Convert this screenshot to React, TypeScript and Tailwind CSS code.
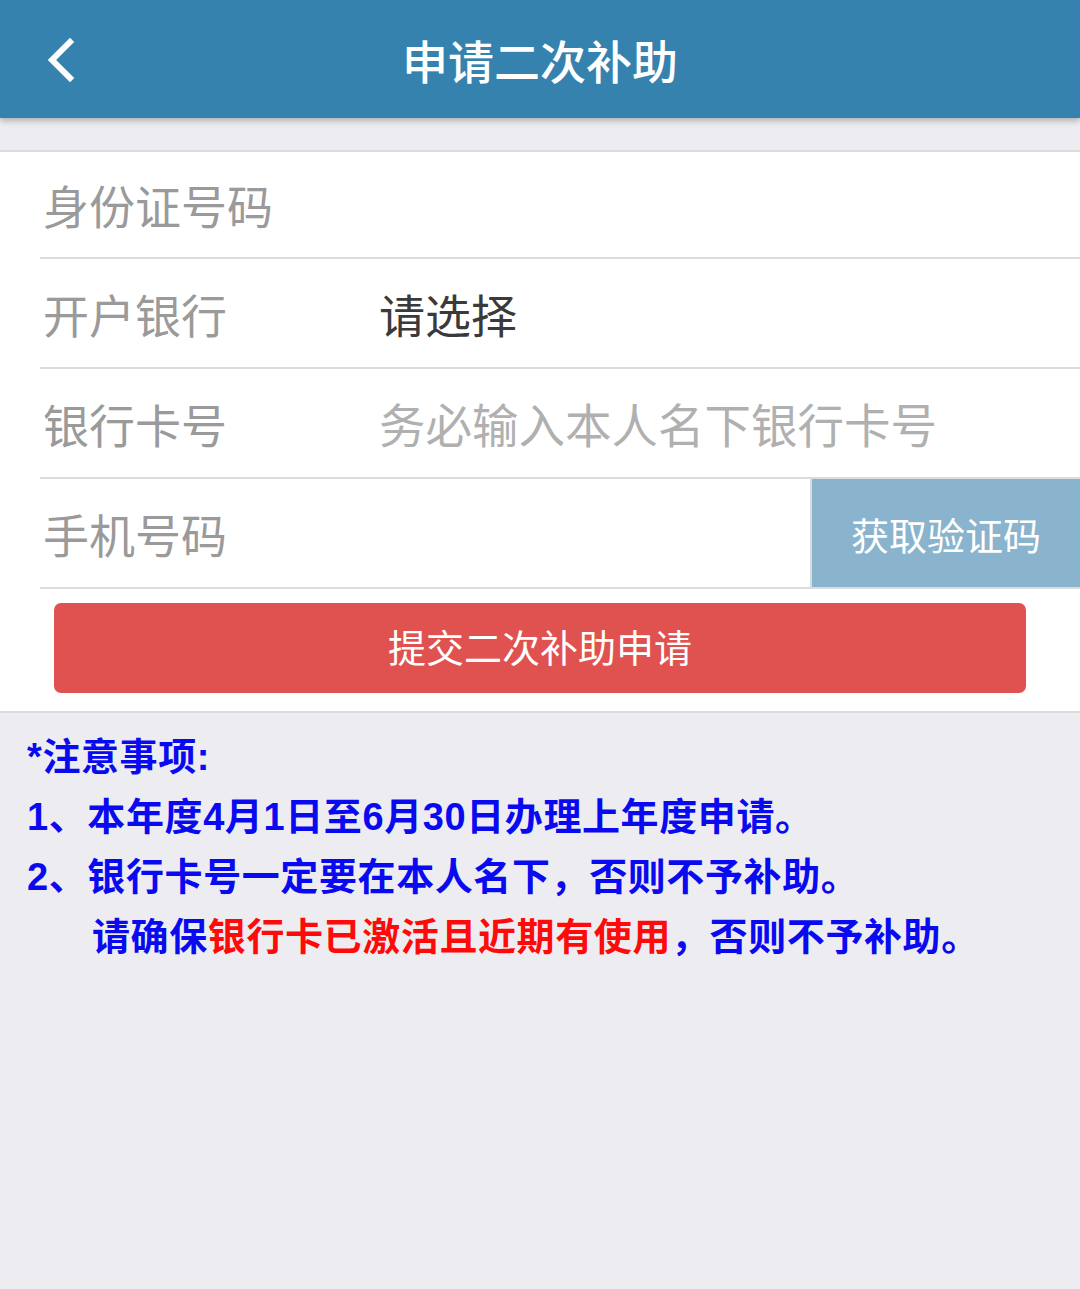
import React from "react";

const font = { fontFamily: '"Noto Sans CJK SC", "Noto Sans", sans-serif' };
const notesFont = { fontFamily: '"Liberation Sans", "Noto Sans CJK SC", sans-serif' };

export default function App() {
  return (
    <div style={font} className="min-h-[1289px] w-[1080px] bg-[#ededf1]">
      <header className="relative z-10 flex h-[118px] items-center justify-center bg-[#3682ae] shadow-[0_3px_6px_rgba(0,0,0,0.25)]">
        <svg className="absolute left-[46px] top-[38px]" width="30" height="44" viewBox="0 0 30 44">
          <path d="M24 4 L6 22 L24 40" fill="none" stroke="#fff" strokeWidth="6" strokeLinecap="square" />
        </svg>
        <h1 className="text-[46px] font-medium text-white">申请二次补助</h1>
      </header>
      <div className="h-[32px]" />
      <section className="border-y-2 border-[#dcdcdc] bg-white">
        <div className="ml-[40px] flex h-[107px] items-center border-b-2 border-[#dcdcdc]">
          <span className="pl-[3px] text-[46px] text-[#9a9a9a]">身份证号码</span>
        </div>
        <div className="ml-[40px] flex h-[110px] items-center border-b-2 border-[#dcdcdc]">
          <span className="w-[339px] pl-[3px] text-[46px] text-[#9a9a9a]">开户银行</span>
          <span className="text-[46px] text-[#3a3a3a]">请选择</span>
        </div>
        <div className="ml-[40px] flex h-[110px] items-center border-b-2 border-[#dcdcdc]">
          <span className="w-[339px] pl-[3px] text-[46px] text-[#9a9a9a]">银行卡号</span>
          <span className="text-[46.5px] text-[#b0b0b0]">务必输入本人名下银行卡号</span>
        </div>
        <div className="ml-[40px] flex h-[110px] items-stretch border-b-2 border-[#dcdcdc]">
          <div className="flex flex-1 items-center">
            <span className="pl-[3px] text-[46px] text-[#9a9a9a]">手机号码</span>
          </div>
          <button className="flex w-[270px] items-center justify-center border-l-2 border-[#d6dde2] bg-[#8ab4ce] text-[38px] text-white">
            获取验证码
          </button>
        </div>
        <div className="px-[54px] pt-[14px] pb-[18px]">
          <button className="flex h-[90px] w-full items-center justify-center rounded-[7px] bg-[#e0524f] pb-[6px] text-[38px] text-white">
            提交二次补助申请
          </button>
        </div>
      </section>
      <section style={notesFont} className="px-[27px] pt-[14px] text-[38px] font-bold leading-[60px] tracking-[0.6px] text-[#0a0af0]">
        <p>*注意事项:</p>
        <p>1、本年度4月1日至6月30日办理上年度申请。</p>
        <p>2、银行卡号一定要在本人名下，否则不予补助。</p>
        <p className="pl-[65px]">
          请确保<span className="text-[#ff0a0a]">银行卡已激活且近期有使用</span>，否则不予补助。
        </p>
      </section>
    </div>
  );
}
